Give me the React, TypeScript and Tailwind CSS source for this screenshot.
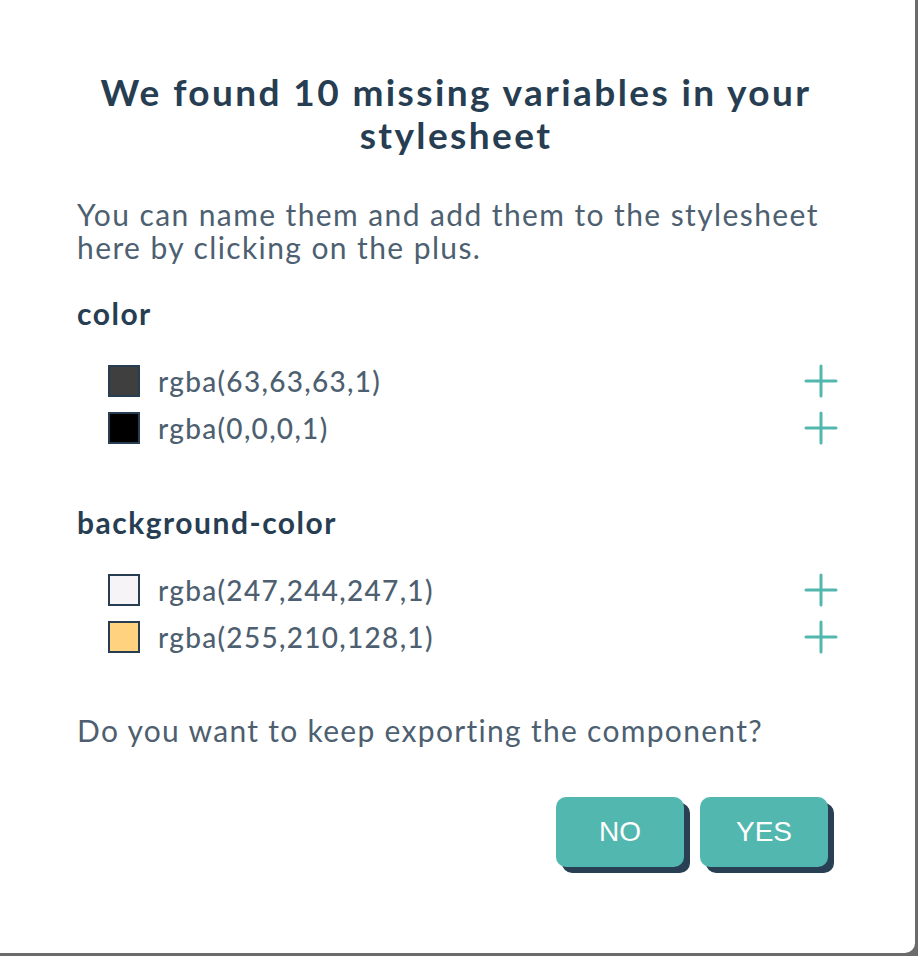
import React from 'react';

const groups = [
  {
    name: 'color',
    values: [
      { label: 'rgba(63,63,63,1)', swatch: 'bg-[#3f3f3f]' },
      { label: 'rgba(0,0,0,1)', swatch: 'bg-[#000000]' },
    ],
  },
  {
    name: 'background-color',
    values: [
      { label: 'rgba(247,244,247,1)', swatch: 'bg-[#f7f4f7]' },
      { label: 'rgba(255,210,128,1)', swatch: 'bg-[#ffd280]' },
    ],
  },
];

const PlusIcon = () => (
  <svg width="34" height="34" viewBox="0 0 34 34" fill="none">
    <path d="M17 2v30M2 17h30" stroke="#52b7ae" strokeWidth="3" strokeLinecap="round" />
  </svg>
);

const App = () => {
  return (
    <div className="w-[918px] h-[956px] bg-[#6b6b6b] overflow-hidden">
      <div className="w-[915px] h-[953px] bg-white rounded-br-[10px] flex flex-col pl-[77px] pr-[80px] font-['Lato',sans-serif]">
        <h1 className="mt-[70px] text-center text-[37px] leading-[43px] tracking-[2.4px] font-bold text-[#263d52]">
          We found 10 missing variables in your stylesheet
        </h1>

        <p className="mt-[42px] text-[30px] leading-[33px] tracking-[1.4px] text-[#4d5f70]">
          You can name them and add them to the stylesheet here by clicking on the plus.
        </p>

        {groups.map((group, gi) => (
          <div key={group.name} className={gi === 0 ? 'mt-[32px]' : 'mt-[54px]'}>
            <h2 className="text-[30px] leading-[34px] tracking-[1.5px] font-bold text-[#263d52]">{group.name}</h2>
            <div className="mt-[27px] flex flex-col">
              {group.values.map(v => (
                <div key={v.label} className="h-[47px] flex items-center pl-[31px]">
                  <span className={`w-[32px] h-[32px] border-2 border-[#263d52] ${v.swatch}`} />
                  <span className="ml-[18px] text-[28px] tracking-[1.3px] text-[#4d5f70] font-medium">{v.label}</span>
                  <span className="ml-auto mr-[-3px]">
                    <PlusIcon />
                  </span>
                </div>
              ))}
            </div>
          </div>
        ))}

        <p className="mt-[54px] text-[30px] leading-[33px] tracking-[1.3px] text-[#4d5f70]">
          Do you want to keep exporting the component?
        </p>

        <div className="mt-[50px] flex justify-end gap-[16px] pr-[7px]">
          <button className="w-[128px] h-[70px] rounded-[10px] bg-[#52b7ae] text-white text-[28px] font-['Liberation_Sans',sans-serif] shadow-[6px_6px_0_#283f54]">
            NO
          </button>
          <button className="w-[128px] h-[70px] rounded-[10px] bg-[#52b7ae] text-white text-[28px] font-['Liberation_Sans',sans-serif] shadow-[6px_6px_0_#283f54]">
            YES
          </button>
        </div>
      </div>
    </div>
  );
};

export default App;
